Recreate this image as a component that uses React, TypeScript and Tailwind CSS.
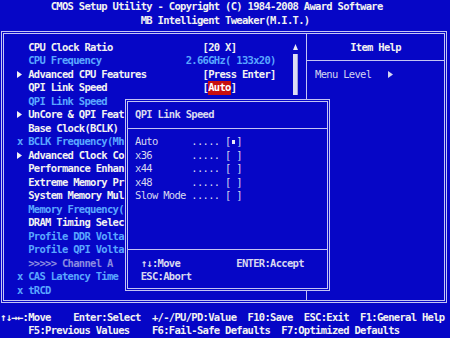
import React from "react";

const W = "text-[#f2f2f2]";
const B = "text-[#5aa6ff]";
const G = "text-[#8a8ae0]";

const Tri = ({ className = "" }: { className?: string }) => (
  <svg width="5" height="7" viewBox="0 0 5 7" className={className}>
    <polygon points="0,0 5,3.5 0,7" fill="currentColor" />
  </svg>
);

type Row = {
  m?: "tri" | "x";
  name: string;
  c: string;
  val?: React.ReactNode;
  nw?: string;
};

const rows: Row[] = [
  { name: "CPU Clock Ratio", c: W, val: <span className={W}>[20 X]</span> },
  {
    name: "CPU Frequency",
    c: B,
    nw: "w-[157.5px]",
    val: <span className={B}>2.66GHz( 133x20)</span>,
  },
  { m: "tri", name: "Advanced CPU Features", c: W, val: <span className={W}>[Press Enter]</span> },
  {
    name: "QPI Link Speed",
    c: W,
    val: (
      <span className={`${W} flex`}>
        <span>[</span>
        <span className="bg-[#c81010] text-white">Auto</span>
        <span>]</span>
      </span>
    ),
  },
  { name: "QPI Link Speed", c: B },
  { m: "tri", name: "UnCore & QPI Feat", c: W },
  { name: "Base Clock(BCLK)", c: W },
  { m: "x", name: "BCLK Frequency(Mh", c: B },
  { m: "tri", name: "Advanced Clock Co", c: W },
  { name: "Performance Enhan", c: W },
  { name: "Extreme Memory Pr", c: W },
  { name: "System Memory Mul", c: W },
  { name: "Memory Frequency(", c: B },
  { name: "DRAM Timing Selec", c: W },
  { name: "Profile DDR Volta", c: B },
  { name: "Profile QPI Volta", c: B },
  { name: ">>>>> Channel A", c: G },
  { m: "x", name: "CAS Latency Time", c: B },
  { m: "x", name: "tRCD", c: B },
];

const options = ["Auto", "x36", "x44", "x48", "Slow Mode"];

export default function App() {
  return (
    <div className="relative w-[450px] h-[338px] overflow-hidden bg-[#0606c6] font-['DejaVu_Sans_Mono',monospace] font-bold text-[10.5px] leading-[13.5px] tracking-[-0.6965px] text-[#f2f2f2]">
      {/* header */}
      <div className="h-[13.5px] whitespace-pre">{"         CMOS Setup Utility - Copyright (C) 1984-2008 Award Software"}</div>
      <div className="h-[13.5px] whitespace-pre">{"                         MB Intelligent Tweaker(M.I.T.)"}</div>

      {/* main frame */}
      <div className="ml-[1px] mt-[4px] w-[446px] h-[272px] border-[3px] border-double border-[#c4c4f4] flex">
        {/* left panel */}
        <div className="w-[302px] flex">
          <div className="w-[288.5px] pl-[12.875px] pt-[6.5px]">
            {rows.map((r, i) => (
              <div key={i} className="flex h-[13.5px] items-center whitespace-pre">
                <span className="w-[11.25px] h-[13.5px] flex items-center">
                  {r.m === "tri" && <Tri className="text-[#f2f2f2] ml-[0.5px]" />}
                  {r.m === "x" && <span className={B}>x</span>}
                </span>
                <span className={`${r.nw ?? "w-[174.375px]"} ${r.c}`}>{r.name}</span>
                {r.val}
              </div>
            ))}
          </div>
          <div className="w-[5.625px] pt-[6.5px] flex flex-col items-center">
            <div className="h-[13.5px] flex items-center justify-center">
              <svg width="5" height="6" viewBox="0 0 5 6">
                <polygon points="2.5,0 5,6 0,6" fill="#e8e8f8" />
              </svg>
            </div>
            <div className="w-[5px] h-[41px] bg-[#dcdcf4] border-r border-[#a0a0d8]" />
          </div>
        </div>

        {/* right panel */}
        <div className="flex-1 border-l border-[#c4c4f4] pt-[6.5px]">
          <div className="h-[13.5px] text-center whitespace-pre">Item Help</div>
          <div className="mt-[6px] h-px bg-[#c4c4f4]" />
          <div className="mt-[6.5px] h-[13.5px] pl-[8px] flex items-center whitespace-pre text-[#d4d4f0] font-normal">
            <span className="w-[73.125px]">Menu Level</span>
            <Tri className="text-[#d4d4f0]" />
          </div>
        </div>
      </div>

      {/* footer */}
      <div className="mt-[7.5px] h-[13.5px] whitespace-pre">{"↑↓→←:Move    Enter:Select  +/-/PU/PD:Value  F10:Save  ESC:Exit  F1:General Help"}</div>
      <div className="h-[13.5px] whitespace-pre">{"     F5:Previous Values    F6:Fail-Safe Defaults  F7:Optimized Defaults"}</div>

      {/* popup */}
      <div className="absolute left-[125px] top-[99px] w-[205px] h-[192px] bg-[#0606c6] border-[3px] border-double border-[#c4c4f4] flex flex-col text-[#d8d8f0]">
        <div className="h-[26px] pt-[6px] pl-[7px] whitespace-pre">
          <div className="h-[13.5px]">QPI Link Speed</div>
        </div>
        <div className="h-px bg-[#c4c4f4]" />
        <div className="h-[120px] pt-[6px] pl-[7px]">
          {options.map((o, i) => (
            <div key={o} className="h-[13.5px] flex items-center whitespace-pre font-normal">
              <span className="w-[56.25px]">{o}</span>
              <span>{"..... ["}</span>
              <span className="w-[5.625px] flex items-center justify-center">
                {i === 0 && <span className="block w-[3px] h-[4px] bg-[#e8e8f8]" />}
              </span>
              <span>]</span>
            </div>
          ))}
        </div>
        <div className="h-px bg-[#c4c4f4]" />
        <div className="pt-[6.5px] pl-[12.625px]">
          <div className="h-[13.5px] flex whitespace-pre">
            <span className="w-[95.625px]">↑↓:Move</span>
            <span>ENTER:Accept</span>
          </div>
          <div className="h-[13.5px] whitespace-pre">ESC:Abort</div>
        </div>
      </div>
    </div>
  );
}
